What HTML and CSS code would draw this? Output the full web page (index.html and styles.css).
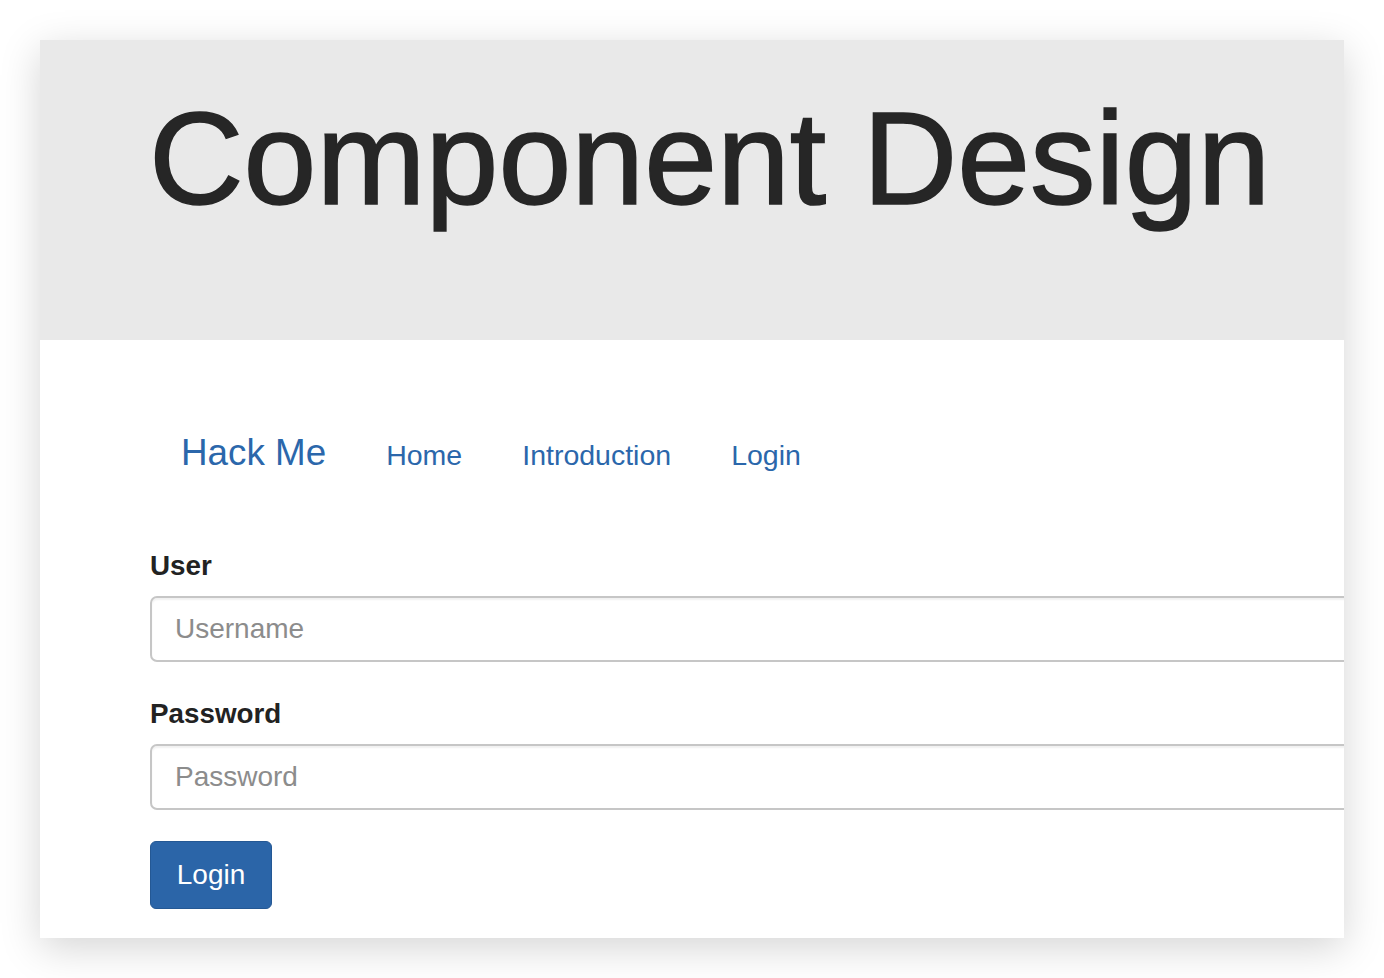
FILE: index.html
```html
<!DOCTYPE html>
<html lang="en">
<head>
<meta charset="utf-8">
<title>Component Design</title>
<link rel="stylesheet" href="styles.css">
</head>
<body>
<div class="window">
  <header class="jumbotron">
    <h1 class="title">Component Design</h1>
  </header>
  <main class="content">
    <nav class="navbar">
      <a class="brand" href="#">Hack Me</a>
      <a class="nav-link" href="#">Home</a>
      <a class="nav-link" href="#">Introduction</a>
      <a class="nav-link" href="#">Login</a>
    </nav>
    <form class="login-form">
      <div class="form-group">
        <label class="label" for="user">User</label>
        <input class="input" id="user" type="text" placeholder="Username">
      </div>
      <div class="form-group form-group-last">
        <label class="label" for="pass">Password</label>
        <input class="input" id="pass" type="password" placeholder="Password">
      </div>
      <button class="btn" type="button">Login</button>
    </form>
  </main>
</div>
</body>
</html>
```
FILE: styles.css
```css
html, body {
  margin: 0;
  padding: 0;
  background: #ffffff;
}
body {
  font-family: "Liberation Sans", Arial, sans-serif;
  height: 978px;
  overflow: hidden;
}
.window {
  margin: 40px;
  width: 1304px;
  height: 898px;
  background: #ffffff;
  overflow: hidden;
  box-shadow: 0 10px 38px rgba(0, 0, 0, 0.17);
}
.jumbotron {
  height: 300px;
  box-sizing: border-box;
  background: #e9e9e9;
  padding: 53px 0 0 109px;
}
.title {
  margin: 0;
  font-size: 131px;
  line-height: 1;
  font-weight: 400;
  color: #262626;
  -webkit-text-stroke: 1.6px #262626;
  white-space: nowrap;
}
.content {
  padding: 95px 0 0 110px;
}
.navbar {
  display: flex;
  align-items: baseline;
  height: 38px;
}
.brand {
  font-size: 36.8px;
  line-height: 1;
  color: #2b67ab;
  text-decoration: none;
  margin-left: 31px;
  margin-right: 30px;
}
.nav-link {
  font-size: 28.5px;
  line-height: 1;
  color: #2b67ab;
  text-decoration: none;
  padding: 0 30px;
}
.login-form {
  margin-top: 79px;
}
.form-group {
  margin-bottom: 38px;
}
.form-group-last {
  margin-bottom: 31px;
}
.label {
  display: block;
  font-size: 27.8px;
  line-height: 27px;
  font-weight: 700;
  color: #222222;
  margin-bottom: 17px;
}
.input {
  display: block;
  box-sizing: border-box;
  width: 1300px;
  height: 66px;
  padding: 0 23px;
  border: 2px solid #c6c6c6;
  border-radius: 7px;
  box-shadow: inset 0 2px 2px rgba(0, 0, 0, 0.06);
  font-family: "Liberation Sans", Arial, sans-serif;
  font-size: 28px;
  color: #555555;
  background: #ffffff;
  outline: none;
}
.input::placeholder {
  color: #8c8c8c;
}
.btn {
  display: block;
  box-sizing: border-box;
  width: 122px;
  height: 68px;
  padding: 0;
  border: 1px solid #245894;
  border-radius: 6px;
  background: #2b65a8;
  color: #ffffff;
  font-family: "Liberation Sans", Arial, sans-serif;
  font-size: 28px;
  line-height: 1;
  text-align: center;
  cursor: pointer;
}
```
